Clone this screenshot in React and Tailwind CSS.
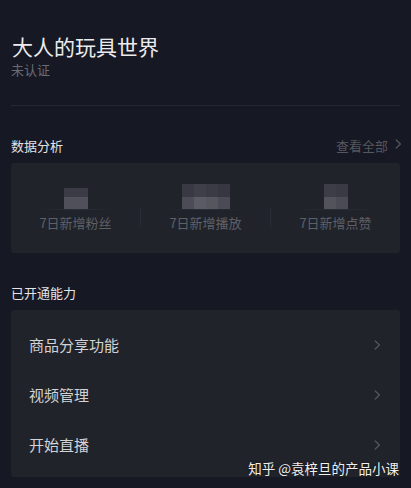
import React from "react";

const font = { fontFamily: '"Noto Sans CJK SC", "Noto Sans", sans-serif' };

function Chevron({ className = "" }) {
  return (
    <svg width="7" height="10" viewBox="0 0 7 10" className={className} fill="none">
      <path d="M1.2 1 L5.4 5 L1.2 9" stroke="currentColor" strokeWidth="1.2" strokeLinecap="round" strokeLinejoin="round" />
    </svg>
  );
}

function Cells({ rows }) {
  return (
    <div className="flex flex-col">
      {rows.map((r, i) => (
        <div key={i} className="flex">
          {r.cells.map((c, j) => (
            <div key={j} className={`w-[12px] ${r.h}`} style={{ backgroundColor: c }} />
          ))}
        </div>
      ))}
    </div>
  );
}

function Stat({ label, rows }) {
  return (
    <div className="flex-1 flex flex-col items-center">
      <div className="h-[25px] flex items-end">
        <Cells rows={rows} />
      </div>
      <div className="w-[80px] h-px bg-gradient-to-r from-transparent via-[#2d2f38] to-transparent" />
      <div className="mt-[4px] text-[13px] leading-[18px] text-[#5e6068]">{label}</div>
    </div>
  );
}

function Row({ text }) {
  return (
    <div className="h-[50px] flex items-center justify-between pl-[18px] pr-[19px]">
      <span className="text-[15px] text-[#d2d3d6]">{text}</span>
      <Chevron className="text-[#55575e]" />
    </div>
  );
}

export default function App() {
  return (
    <div className="relative min-h-screen bg-[#161823] px-[11px] overflow-hidden" style={font}>
      <div className="pt-[33px] pl-px text-[21px] leading-[26px] text-[#ececee]">大人的玩具世界</div>
      <div className="mt-[2px] text-[13px] leading-[18px] text-[#6a6c73]">未认证</div>
      <div className="mt-[26px] h-px bg-[#252731]" />

      <div className="mt-[30px] flex items-center justify-between h-[20px]">
        <span className="text-[13px] text-[#e4e4e6]">数据分析</span>
        <span className="flex items-center gap-[7px] -mr-[2px] text-[13px] text-[#55575e]">
          查看全部
          <Chevron className="-mt-[4px]" />
        </span>
      </div>

      <div className="mt-[7px] h-[90px] rounded-[3px] bg-[#21232b] flex pt-[21px]">
        <Stat
          label="7日新增粉丝"
          rows={[
            { h: "h-[9px]", cells: ["#3a3b44", "#3a3b44"] },
            { h: "h-[12px]", cells: ["#4f5059", "#4f5059"] },
          ]}
        />
        <div className="w-px h-[19px] mt-[24px] bg-[#2b2d36]" />
        <Stat
          label="7日新增播放"
          rows={[
            { h: "h-[13px]", cells: ["#383943", "#3e3f49", "#3a3b45", "#363741"] },
            { h: "h-[12px]", cells: ["#4b4c55", "#5a5b63", "#55565e", "#4a4b54"] },
          ]}
        />
        <div className="w-px h-[19px] mt-[24px] bg-[#2b2d36]" />
        <Stat
          label="7日新增点赞"
          rows={[
            { h: "h-[13px]", cells: ["#3c3d47", "#393a44"] },
            { h: "h-[12px]", cells: ["#52535b", "#4a4b54"] },
          ]}
        />
      </div>

      <div className="mt-[30px] h-[20px] flex items-center">
        <span className="text-[13px] text-[#e4e4e6]">已开通能力</span>
      </div>

      <div className="mt-[7px] rounded-[3px] bg-[#21232b] pt-[10px] pb-[7px]">
        <Row text="商品分享功能" />
        <Row text="视频管理" />
        <Row text="开始直播" />
      </div>

      <div className="absolute right-[12px] top-[459px] text-[13.5px] leading-[18px] text-[#f0f0f0] [text-shadow:0_0_2px_rgba(0,0,0,0.6)]">
        知乎 @袁梓旦的产品小课
      </div>
    </div>
  );
}
